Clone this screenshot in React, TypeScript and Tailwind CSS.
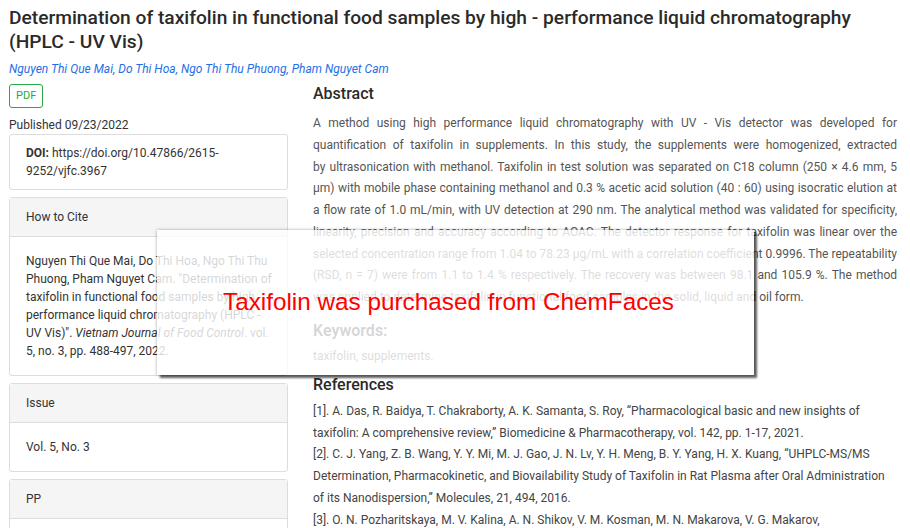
const authors = ["Nguyen Thi Que Mai", "Do Thi Hoa", "Ngo Thi Thu Phuong", "Pham Nguyet Cam"];

// non-breaking spaces keep the line breaks of the original page
const abstractText =
  "A method using high performance liquid chromatography with UV - Vis detector was developed for quantification of taxifolin in supplements. In this study, the supplements were homogenized, extracted by\u00A0ultrasonication with methanol. Taxifolin in test solution was separated on C18 column (250 × 4.6 mm, 5 µm) with mobile phase containing methanol and 0.3 % acetic acid solution (40 : 60) using isocratic elution at a\u00A0flow rate of 1.0 mL/min, with UV detection at 290 nm. The analytical method was validated for specificity, linearity, precision and accuracy according to AOAC. The detector response for taxifolin was linear over the selected concentration range from 1.04 to 78.23 µg/mL with a correlation coefficient 0.9996. The repeatability (RSD, n = 7) were from 1.1 to 1.4 % respectively. The recovery was between 98.1 and 105.9 %. The method was applied to determine taxifolin in functional food samples in the solid, liquid and oil form.";

const references = [
  "[1]. A. Das, R. Baidya, T. Chakraborty, A. K. Samanta, S. Roy, “Pharmacological basic and new insights of taxifolin: A comprehensive review,” Biomedicine & Pharmacotherapy, vol. 142, pp. 1-17, 2021.",
  "[2]. C. J. Yang, Z. B. Wang, Y. Y. Mi, M. J. Gao, J. N. Lv, Y. H. Meng, B. Y. Yang, H. X. Kuang, “UHPLC-MS/MS Determination, Pharmacokinetic, and Biovailability Study of Taxifolin in Rat Plasma after Oral Administration of its Nanodispersion,” Molecules, 21, 494, 2016.",
  "[3]. O. N. Pozharitskaya, M. V. Kalina, A. N. Shikov, V. M. Kosman, M. N. Makarova, V. G. Makarov,",
];

function Panel({ title, children }: { title: string; children: React.ReactNode }) {
  return (
    <div className="mb-[7px] rounded-[3px] border border-[#dddddd] bg-white">
      <div className="border-b border-[#dddddd] bg-[#f5f5f5] px-4 py-[10px] leading-[18px]">{title}</div>
      <div className="py-[15px] pl-4 pr-[12px] leading-[18px]">{children}</div>
    </div>
  );
}

export default function App() {
  return (
    <div className="relative h-[528px] w-[910px] overflow-hidden bg-white font-['Roboto',sans-serif] text-[12px] text-[#333333]">
      <div className="px-[9px] pt-[6px]">
        <h1 className="text-[19.2px] font-medium leading-[23.5px] text-[#2a2a2a]">
          Determination of taxifolin in functional food samples by high - performance liquid chromatography (HPLC - UV Vis)
        </h1>
        <p className="mt-[7px] italic leading-[18px] text-[#1f6fe5]">
          {authors.map((a, i) => (
            <span key={a}>
              {a}
              {i < authors.length - 1 ? ", " : ""}
            </span>
          ))}
        </p>

        <div className="mt-[6px] flex gap-[25px]">
          <aside className="w-[279px] shrink-0">
            <button className="h-[24px] rounded-[3px] border border-[#28a745] px-[6px] text-[11px] text-[#28a745]">
              PDF
            </button>
            <div className="mt-[11px] leading-[13px]">Published 09/23/2022</div>
            <div className="mb-[7px] mt-[2px] rounded-[3px] border border-[#dddddd] px-4 py-[9px] leading-[18px]">
              <b>DOI:</b> https://doi.org/10.47866/2615-9252/vjfc.3967
            </div>
            <Panel title="How to Cite">
              Nguyen Thi Que Mai, Do Thi Hoa, Ngo Thi Thu Phuong, Pham Nguyet Cam. "Determination of taxifolin in functional food samples by high - performance liquid chromatography (HPLC - UV Vis)". <i>Vietnam Journal of Food Control</i>. vol. 5, no. 3, pp. 488-497, 2022.
            </Panel>
            <Panel title="Issue">Vol. 5, No. 3</Panel>
            <Panel title="PP">488-497</Panel>
          </aside>

          <main className="w-[584px]">
            <h2 className="text-[16px] font-medium leading-[20px] text-[#2a2a2a]">Abstract</h2>
            <p className="mt-[9px] text-justify leading-[21.75px] text-[#555555]">{abstractText}</p>
            <h2 className="mt-[12px] text-[16px] font-semibold leading-[20px] text-[#333333]">Keywords:</h2>
            <p className="mt-[4px] leading-[22px] text-[#555555]">taxifolin, supplements.</p>
            <h2 className="mt-[8px] text-[16px] font-medium leading-[20px] text-[#2a2a2a]">References</h2>
            <div className="mt-[6px] leading-[21.75px] text-[#444444]">
              {references.map((r) => (
                <p key={r}>{r}</p>
              ))}
            </div>
          </main>
        </div>
      </div>

      <div className="absolute left-[157px] top-[230px] flex h-[145px] w-[597px] items-center justify-center bg-white/80 pr-[14px] shadow-[0_0_3px_rgba(0,0,0,0.35),3px_3px_2px_rgba(0,0,0,0.6)]">
        <span className="font-['Liberation_Sans',Arial,sans-serif] text-[24.3px] leading-none text-[#ff0000]">
          Taxifolin was purchased from ChemFaces
        </span>
      </div>
    </div>
  );
}
